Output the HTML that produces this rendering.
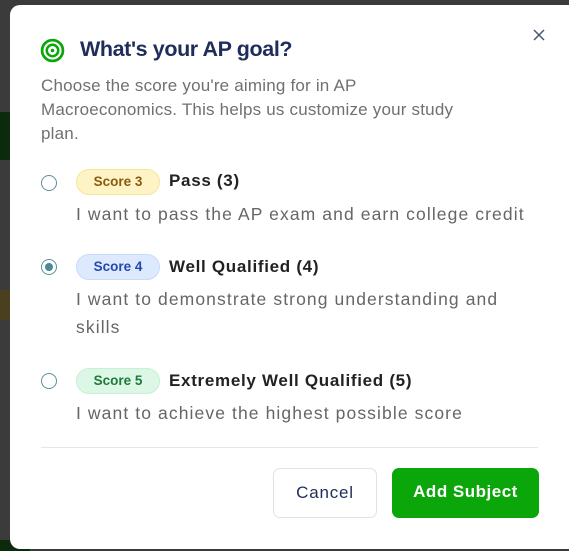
<!DOCTYPE html>
<html><head><style>
*{margin:0;padding:0;box-sizing:border-box}
body{width:569px;height:551px;background:#3b3b3b;position:relative;overflow:hidden;font-family:"Liberation Sans",sans-serif}
.g1{position:absolute;left:0;top:112px;width:12px;height:48px;background:#0c2a0c}
.g2{position:absolute;left:0;top:290px;width:12px;height:30px;background:#4a4020}
.g3{position:absolute;left:0;top:540px;width:30px;height:11px;background:#0c2a0c}
.m{position:absolute;left:10px;top:5px;width:570px;height:544px;background:#fff;border-radius:10px}
.a{position:absolute;white-space:nowrap}
.t{left:80px;top:37px;font-size:21.5px;font-weight:bold;color:#1f2d5a;letter-spacing:-0.4px}
.d{left:41px;top:74px;font-size:17px;line-height:24px;color:#707070;letter-spacing:0.2px}
.r{width:16px;height:16px;border:1.5px solid #5b8f9a;border-radius:50%}
.r.on::after{content:"";position:absolute;left:2.5px;top:2.5px;width:8px;height:8px;border-radius:50%;background:#4a8a94}
.b{height:26px;border-radius:13px;font-size:13.5px;font-weight:bold;line-height:24px;text-align:center;width:84px;left:76px}
.l{left:169px;font-size:17px;font-weight:bold;color:#222;letter-spacing:0.7px}
.x{left:76px;font-size:17.5px;color:#666;line-height:28px;letter-spacing:1.1px}
.btn{top:468px;height:50px;border-radius:7px;font-size:17px;line-height:48px;text-align:center}
</style></head><body>
<div class="g1"></div><div class="g2"></div><div class="g3"></div>
<div class="m"></div>
<svg class="a" style="left:40px;top:38px" width="25" height="25" viewBox="0 0 24 24"><circle cx="12" cy="12" r="10" fill="none" stroke="#0aa60a" stroke-width="2.6"/><circle cx="12" cy="12" r="5.5" fill="none" stroke="#0aa60a" stroke-width="2.4"/><circle cx="12" cy="12" r="1.7" fill="#0aa60a"/></svg>
<div class="a t">What's your AP goal?</div>
<svg class="a" style="left:532px;top:28px" width="14" height="14" viewBox="0 0 14 14"><path d="M2 2L12 12M12 2L2 12" stroke="#4a5678" stroke-width="1.5"/></svg>
<div class="a d">Choose the score you're aiming for in AP<br>Macroeconomics. This helps us customize your study<br>plan.</div>

<div class="a r" style="left:41px;top:175px"></div>
<div class="a b" style="top:169px;background:#fdf3c4;border:1px solid #f7e69a;color:#8a5a10">Score 3</div>
<div class="a l" style="top:171px">Pass (3)</div>
<div class="a x" style="top:200px">I want to pass the AP exam and earn college credit</div>

<div class="a r on" style="left:41px;top:259px"></div>
<div class="a b" style="top:254px;background:#dde9fd;border:1px solid #c8dbfb;color:#2448b0">Score 4</div>
<div class="a l" style="top:257px">Well Qualified (4)</div>
<div class="a x" style="top:285px">I want to demonstrate strong understanding and<br>skills</div>

<div class="a r" style="left:41px;top:373px"></div>
<div class="a b" style="top:368px;background:#dcf7e5;border:1px solid #c8f0d4;color:#1f7a3a">Score 5</div>
<div class="a l" style="top:371px">Extremely Well Qualified (5)</div>
<div class="a x" style="top:399px">I want to achieve the highest possible score</div>

<div class="a" style="left:41px;top:447px;width:497px;height:1px;background:#e6e6e6"></div>
<div class="a btn" style="left:273px;width:104px;border:1px solid #e2e2e2;color:#1f2d5a;letter-spacing:0.8px">Cancel</div>
<div class="a btn" style="left:392px;width:147px;background:#0aa60a;color:#fff;font-weight:bold;letter-spacing:0.5px">Add Subject</div>
</body></html>
